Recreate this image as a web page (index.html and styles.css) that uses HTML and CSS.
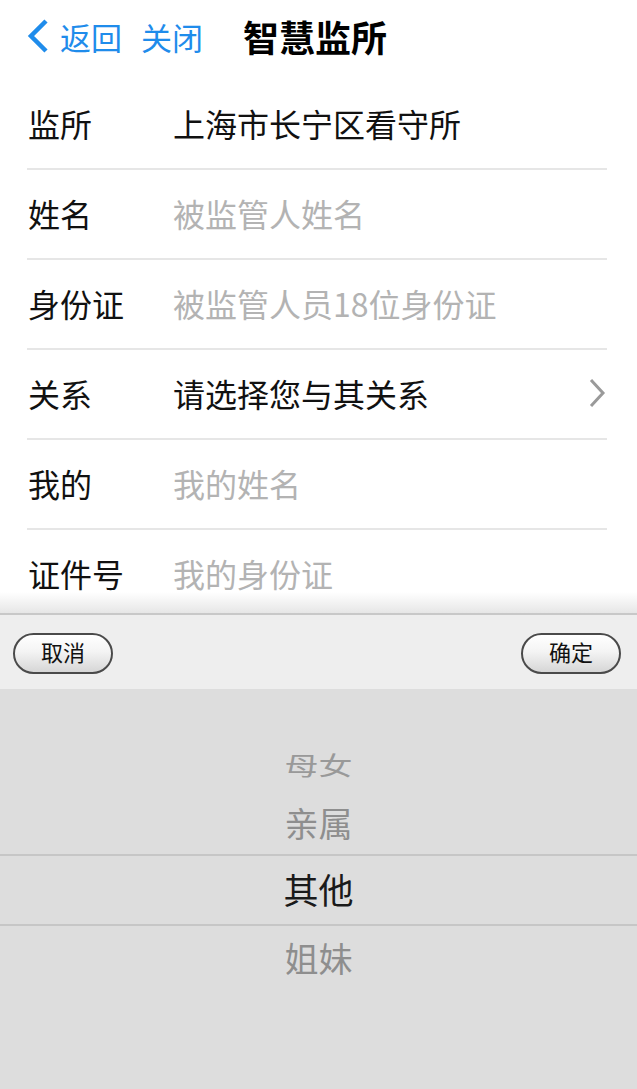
FILE: index.html
```html
<!DOCTYPE html>
<html lang="zh">
<head>
<meta charset="utf-8">
<link rel="stylesheet" href="styles.css">
</head>
<body>
<header class="nav">
  <a class="nav-back">
    <svg class="chev-left" width="22" height="36" viewBox="0 0 22 36"><path d="M19 3 L4 18 L19 33" fill="none" stroke="#1f8ceb" stroke-width="4.5"/></svg>
    <span>返回</span>
  </a>
  <a class="nav-close">关闭</a>
  <h1 class="nav-title">智慧监所</h1>
</header>
<main class="form">
  <div class="row"><span class="label">监所</span><span class="value">上海市长宁区看守所</span></div>
  <div class="row"><span class="label">姓名</span><span class="value placeholder">被监管人姓名</span></div>
  <div class="row"><span class="label">身份证</span><span class="value placeholder">被监管人员18位身份证</span></div>
  <div class="row"><span class="label">关系</span><span class="value">请选择您与其关系</span>
    <svg class="chev-right" width="20" height="32" viewBox="0 0 20 32"><path d="M4 3 L16 16 L4 29" fill="none" stroke="#9a9a9a" stroke-width="3"/></svg>
  </div>
  <div class="row"><span class="label">我的</span><span class="value placeholder">我的姓名</span></div>
  <div class="row"><span class="label">证件号</span><span class="value placeholder">我的身份证</span></div>
</main>
<div class="sheet">
  <div class="sheet-shadow"></div>
  <div class="toolbar">
    <button class="pill">取消</button>
    <button class="pill">确定</button>
  </div>
  <div class="wheel">
    <div class="item far"><span>母女</span></div>
    <div class="item">亲属</div>
    <div class="item selected">其他</div>
    <div class="item">姐妹</div>
  </div>
</div>
</body>
</html>
```
FILE: styles.css
```css
* { box-sizing: border-box; }
html, body { margin: 0; padding: 0; }
body {
  width: 637px;
  height: 1089px;
  overflow: hidden;
  background: #fff;
  font-family: "Noto Sans CJK SC", "Noto Sans", sans-serif;
  color: #111;
  position: relative;
}
.nav {
  height: 80px;
  display: flex;
  align-items: center;
  padding-left: 27px;
  padding-bottom: 8px;
}
.nav-back {
  display: flex;
  align-items: center;
  color: #1f8ceb;
  font-size: 31px;
}
.chev-left { margin-right: 11px; }
.nav-close {
  color: #1f8ceb;
  font-size: 31px;
  margin-left: 19px;
}
.nav-title {
  margin: 0 0 0 40px;
  font-size: 36px;
  font-weight: 700;
  color: #000;
}
.form {
  padding-left: 27px;
  margin-right: 30px;
}
.row {
  height: 90px;
  display: flex;
  align-items: center;
  border-bottom: 2px solid #e6e6e6;
  font-size: 32px;
  padding-bottom: 2px;
}
.label {
  width: 146px;
  color: #111;
  padding-left: 1px;
}
.value { flex: 1; color: #111; }
.placeholder { color: #b3b3b3; }
.chev-right { margin-right: 0; }
.sheet {
  position: absolute;
  left: 0;
  right: 0;
  top: 592px;
  bottom: 0;
  display: flex;
  flex-direction: column;
}
.sheet-shadow {
  height: 21px;
  background: linear-gradient(to bottom, rgba(255,255,255,0), rgba(210,210,210,0.55));
}
.toolbar {
  height: 76px;
  background: #eeeeee;
  border-top: 2px solid #c8c8c8;
  display: flex;
  justify-content: space-between;
  align-items: flex-start;
  padding: 18px 16px 0 13px;
}
.pill {
  width: 100px;
  height: 41px;
  border: 2px solid #4a4a4a;
  border-radius: 21px;
  background: linear-gradient(to bottom, #ffffff 0%, #f4f4f4 45%, #d6d6d6 100%);
  font-family: "Noto Sans CJK SC", sans-serif;
  font-size: 22px;
  color: #111;
  padding: 0 0 5px 0;
  line-height: 32px;
}
.wheel {
  flex: 1;
  background: #dddddd;
  padding-top: 48px;
  display: flex;
  flex-direction: column;
}
.item {
  height: 60px;
  display: flex;
  align-items: center;
  justify-content: center;
  font-size: 34px;
  color: #8e8e8e;
  padding-bottom: 3px;
}
.item.far { height: 57px; }
.item.far span { display: inline-block; transform: scaleY(0.72); color: #999; }
.item.selected {
  height: 72px;
  border-top: 2px solid #c6c6c6;
  border-bottom: 2px solid #c6c6c6;
  color: #1a1a1a;
  font-size: 35px;
}
.item:last-child { height: 66px; }
```
